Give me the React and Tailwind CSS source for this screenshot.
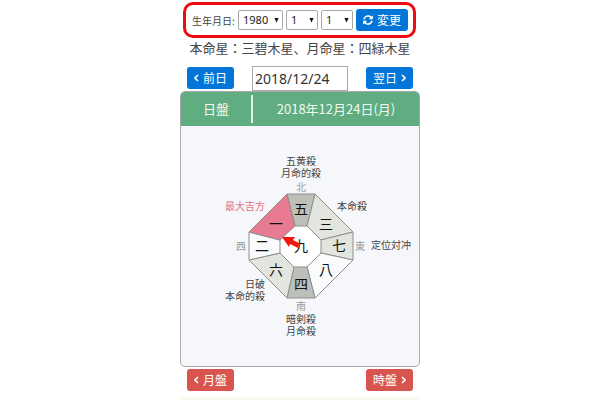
import React from "react";

const range = (from, to) => Array.from({ length: to - from + 1 }, (_, i) => from + i);

function DateSelect({ label, value, options, width }) {
  return (
    <div className={`relative ${width}`}>
      <select
        aria-label={label}
        defaultValue={value}
        className="block h-5 w-full appearance-none rounded-xs border border-[#a9a9a9] bg-white pl-1 text-[11px] leading-4 text-[#222] font-['Noto_Sans','Noto_Sans_CJK_JP',sans-serif]"
      >
        {options.map((o) => (
          <option key={o} value={o}>{o}</option>
        ))}
      </select>
      <svg aria-hidden="true" viewBox="0 0 6 6" className="pointer-events-none absolute top-[7px] right-1 h-1.5 w-[5px] fill-[#111]">
        <path d="M0.5 0.5H5.5L3 6Z" />
      </svg>
    </div>
  );
}

function Chevron({ right }) {
  return (
    <svg aria-hidden="true" viewBox="0 0 5 8" className="h-2 w-[5px] fill-none stroke-white stroke-[1.6]">
      <path d={right ? "M1 1L4 4L1 7" : "M4 1L1 4L4 7"} />
    </svg>
  );
}

function NavButton({ children, next, color }) {
  return (
    <button type="button" className={`flex h-[22px] items-center gap-1 rounded-[3px] px-[7px] text-xs text-white ${color}`}>
      {!next && <Chevron />}
      <span>{children}</span>
      {next && <Chevron right />}
    </button>
  );
}

const PALACES = [
  { points: "-14,-52 14,-52 6,-20 -6,-20", fill: "#bdc0b9", star: "五", x: 0, y: -32 },
  { points: "14,-52 52,-14 20,-6 6,-20", fill: "#e2e5dd", star: "三", x: 25, y: -17 },
  { points: "52,-14 52,14 20,7 20,-6", fill: "#e2e5dd", star: "七", x: 38, y: 5 },
  { points: "52,14 14,52 6,21 20,7", fill: "#fafbfc", star: "八", x: 25, y: 29 },
  { points: "14,52 -14,52 -7,21 6,21", fill: "#bdc0b9", star: "四", x: 0, y: 43 },
  { points: "-14,52 -52,14 -21,7 -7,21", fill: "#e2e5dd", star: "六", x: -25, y: 29 },
  { points: "-52,14 -52,-14 -21,-6 -21,7", fill: "#fafbfc", star: "二", x: -39, y: 5 },
  { points: "-52,-14 -14,-52 -6,-20 -21,-6", fill: "#e87a92", star: "一", x: -25, y: -17 },
];

const NOTES = [
  { lines: ["五黄殺", "月命的殺"], x: 0, y: -81, anchor: "middle" },
  { lines: ["本命殺"], x: 36, y: -36, anchor: "start" },
  { lines: ["定位対冲"], x: 70, y: 3, anchor: "start" },
  { lines: ["暗剣殺", "月命殺"], x: 0, y: 77, anchor: "middle" },
  { lines: ["日破", "本命的殺"], x: -36, y: 42, anchor: "end" },
];

const DIRECTIONS = [
  { text: "北", x: 0, y: -55 },
  { text: "東", x: 59, y: 4 },
  { text: "南", x: 0, y: 64 },
  { text: "西", x: -60, y: 4 },
];

function Chart() {
  return (
    <svg viewBox="-120 -120 238 240" className="block w-full" textAnchor="middle" role="img" aria-label="日盤">
      <polygon points="-6,-20 6,-20 20,-6 20,7 6,21 -7,21 -21,7 -21,-6" fill="#fff" />
      {PALACES.map((p) => (
        <polygon key={p.star} points={p.points} fill={p.fill} stroke="#8d8f8d" strokeWidth="1" strokeLinejoin="round" />
      ))}
      <g fontSize="14" fill="#111">
        {PALACES.map((p) => (
          <text key={p.star} x={p.x} y={p.y}>{p.star}</text>
        ))}
        <text x="0" y="5">九</text>
      </g>
      <path d="M-19 -9L-6 -9L-8 -6L0 -2L-3 0L-1 3L-11 -2L-12 1Z" fill="#f5160d" />
      <g fontSize="10" fill="#444">
        {NOTES.map((n) => (
          <text key={n.lines[0]} y={n.y} textAnchor={n.anchor}>
            {n.lines.map((line, i) => (
              <tspan key={line} x={n.x} dy={i * 12}>{line}</tspan>
            ))}
          </text>
        ))}
      </g>
      <text x="-56" y="-36" fontSize="10" fill="#e87088">最大吉方</text>
      <g fontSize="10" fill="#999">
        {DIRECTIONS.map((d) => (
          <text key={d.text} x={d.x} y={d.y}>{d.text}</text>
        ))}
      </g>
    </svg>
  );
}

export default function App() {
  return (
    <div className="min-h-screen bg-white text-[#444] font-['Noto_Sans_CJK_JP',sans-serif]">
      <main className="mx-auto flex w-2/5 min-w-60 flex-col pt-0.5">
        <form className="mr-1 ml-[3px] flex h-9 items-center gap-[3px] rounded-[10px] border-3 border-[#ee0a10] pl-1.5" onSubmit={(e) => e.preventDefault()}>
          <span className="w-[43px] shrink-0 text-[10px] whitespace-nowrap">生年月日:</span>
          <DateSelect label="年" value={1980} options={range(1930, 2018)} width="w-[45px]" />
          <DateSelect label="月" value={1} options={range(1, 12)} width="w-8" />
          <DateSelect label="日" value={1} options={range(1, 31)} width="w-8" />
          <button type="submit" className="flex h-[22px] w-[52px] shrink-0 items-center justify-center gap-1 rounded-[3px] bg-[#0275d8] text-xs text-white">
            <svg aria-hidden="true" viewBox="0 0 512 512" className="size-2.5 fill-white">
              <path d="M370.72 133.28C339.458 104.008 298.888 87.962 255.848 88c-77.458.068-144.328 53.178-162.791 126.85-1.344 5.363-6.122 9.15-11.651 9.15H24.103c-7.498 0-13.194-6.807-11.807-14.176C33.933 94.924 134.813 8 256 8c66.448 0 126.791 26.136 171.315 68.685L463.03 40.97C478.149 25.851 504 36.559 504 57.941V192c0 13.255-10.745 24-24 24H345.941c-21.382 0-32.09-25.851-16.971-40.971l41.75-41.749zM32 296h134.059c21.382 0 32.09 25.851 16.971 40.971l-41.75 41.75c31.262 29.273 71.835 45.319 114.876 45.28 77.418-.07 144.315-53.144 162.787-126.849 1.344-5.363 6.122-9.15 11.651-9.15h57.304c7.498 0 13.194 6.807 11.807 14.176C478.067 417.076 377.187 504 256 504c-66.448 0-126.791-26.136-171.315-68.685L48.97 471.03C33.851 486.149 8 475.441 8 454.059V320c0-13.255 10.745-24 24-24z" />
            </svg>
            <span>変更</span>
          </button>
        </form>

        <p className="h-[27px] text-center text-[13px] leading-5 whitespace-nowrap">本命星：三碧木星、月命星：四緑木星</p>

        <div className="flex h-[26px] items-center justify-between px-[7px]">
          <NavButton color="bg-[#0275d8]">前日</NavButton>
          <input
            type="text"
            aria-label="日付"
            defaultValue="2018/12/24"
            className="h-[25px] w-24 border border-[#aaa] bg-white px-0.5 text-sm text-[#333] font-['Noto_Sans',sans-serif]"
          />
          <NavButton next color="bg-[#0275d8]">翌日</NavButton>
        </div>

        <section className="overflow-hidden rounded-[5px] border border-[#aaa] bg-[#f6f7fa]">
          <h1 className="flex h-[34px] items-center bg-[#5fad81] text-[13px] text-[#f2faf0]">
            <span className="w-[72px] border-r-2 border-[#e4f2e4] text-center leading-7">日盤</span>
            <span className="flex-1 text-center">2018年12月24日(月)</span>
          </h1>
          <Chart />
        </section>

        <div className="mt-0.5 flex justify-between px-[7px]">
          <NavButton color="bg-[#d9534f]">月盤</NavButton>
          <NavButton next color="bg-[#d9534f]">時盤</NavButton>
        </div>
        <div className="mt-1.5 h-[3px] bg-[#fbfaf0]" />
      </main>
    </div>
  );
}
